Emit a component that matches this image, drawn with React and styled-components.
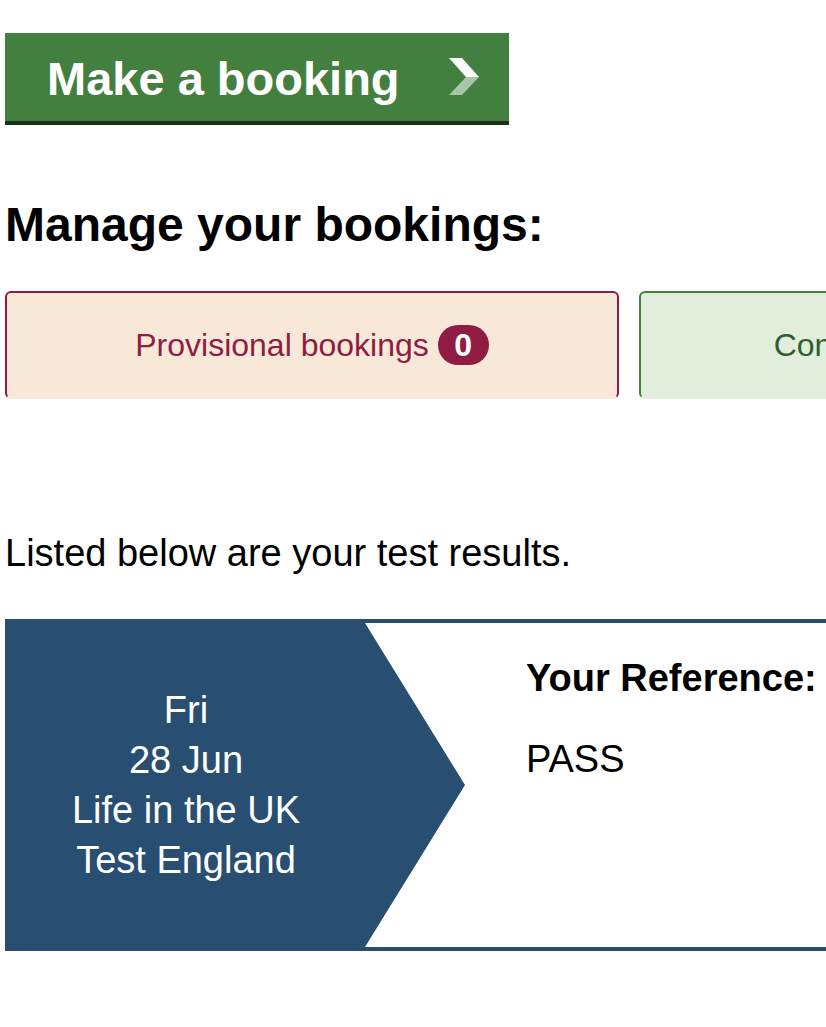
import React from "react";
import styled, { createGlobalStyle } from "styled-components";

const Global = createGlobalStyle`
  html, body {
    margin: 0;
    padding: 0;
    background: #ffffff;
    overflow-x: hidden;
  }
  body {
    font-family: "Liberation Sans", Arial, Helvetica, sans-serif;
    color: #000000;
  }
`;

const Viewport = styled.div`
  width: 100%;
  overflow: hidden;
`;

const Page = styled.main`
  width: 1248px;
  padding: 33px 0 60px 5px;
  display: flex;
  flex-direction: column;
  align-items: flex-start;
`;

const BookButton = styled.a`
  display: inline-flex;
  align-items: center;
  gap: 46px;
  box-sizing: border-box;
  width: 504px;
  height: 92px;
  padding: 4px 29px 0 42px;
  background: #43803f;
  border-bottom: 4px solid #163316;
  color: #ffffff;
  font-size: 47px;
  font-weight: 700;
  line-height: 56px;
  text-decoration: none;

  svg {
    margin-bottom: 4px;
  }
`;

const ButtonLabel = styled.span`
  flex: 1;
  white-space: nowrap;
`;

const Heading = styled.h2`
  margin: 72px 0 0;
  font-size: 48px;
  font-weight: 700;
  line-height: 56px;
`;

const Tabs = styled.nav`
  margin-top: 38px;
  display: flex;
  gap: 20px;
`;

const Tab = styled.a`
  box-sizing: border-box;
  width: 614px;
  height: 108px;
  display: flex;
  align-items: center;
  justify-content: center;
  gap: 9px;
  background: ${(p) => p.$bg};
  border: 2px solid ${(p) => p.$accent};
  border-bottom-color: ${(p) => p.$bg};
  border-radius: 6px;
  color: ${(p) => p.$text};
  font-size: 32px;
  line-height: 40px;
  text-decoration: none;
  white-space: nowrap;
`;

const Badge = styled.span`
  display: inline-flex;
  align-items: center;
  justify-content: center;
  min-width: 51px;
  height: 40px;
  padding: 0 10px;
  box-sizing: border-box;
  border-radius: 20px;
  background: ${(p) => p.$color};
  color: #ffffff;
  font-weight: 700;
  font-size: 32px;
  line-height: 40px;
`;

const Intro = styled.p`
  margin: 129px 0 0;
  font-size: 38px;
  line-height: 50px;
`;

const ResultCard = styled.section`
  margin-top: 41px;
  width: 1243px;
  display: flex;
  box-sizing: border-box;
  height: 332px;
  border-top: 4px solid #284f72;
  border-bottom: 4px solid #284f72;
`;

const DateBlock = styled.div`
  flex: 0 0 460px;
  box-sizing: border-box;
  padding-right: 98px;
  background: #284f72;
  clip-path: polygon(0 0, 360px 0, 100% 50%, 360px 100%, 0 100%);
  display: flex;
  flex-direction: column;
  align-items: center;
  justify-content: center;
  color: #ffffff;
  font-size: 38px;
  line-height: 50px;
  text-align: center;
`;

const Details = styled.div`
  flex: 1;
  padding: 30px 0 0 61px;
  display: flex;
  flex-direction: column;
  gap: 31px;
  font-size: 38px;
  line-height: 50px;
`;

const Label = styled.div`
  font-weight: 700;
  white-space: nowrap;
`;

const Value = styled.div``;

const Chevron = () => (
  <svg width="31" height="38" viewBox="0 0 31 38" aria-hidden="true">
    <polygon points="0,0 13,0 30,19 17,19" fill="#ffffff" />
    <polygon points="17,19 30,19 13,37 0,37" fill="#ffffff" fillOpacity="0.55" />
  </svg>
);

export default function App() {
  return (
    <Viewport>
      <Global />
      <Page>
        <BookButton href="#">
          <ButtonLabel>Make a booking</ButtonLabel>
          <Chevron />
        </BookButton>

        <Heading>Manage your bookings:</Heading>

        <Tabs>
          <Tab href="#" $bg="#f8e8d8" $accent="#8f1c43" $text="#8f1c43">
            Provisional bookings <Badge $color="#8f1c43">0</Badge>
          </Tab>
          <Tab href="#" $bg="#e1eedb" $accent="#45803f" $text="#2f5f2b">
            Confirmed bookings <Badge $color="#45803f">0</Badge>
          </Tab>
        </Tabs>

        <Intro>Listed below are your test results.</Intro>

        <ResultCard>
          <DateBlock>
            <div>Fri</div>
            <div>28 Jun</div>
            <div>Life in the UK</div>
            <div>Test England</div>
          </DateBlock>
          <Details>
            <Label>Your Reference:</Label>
            <Value>PASS</Value>
          </Details>
        </ResultCard>
      </Page>
    </Viewport>
  );
}
